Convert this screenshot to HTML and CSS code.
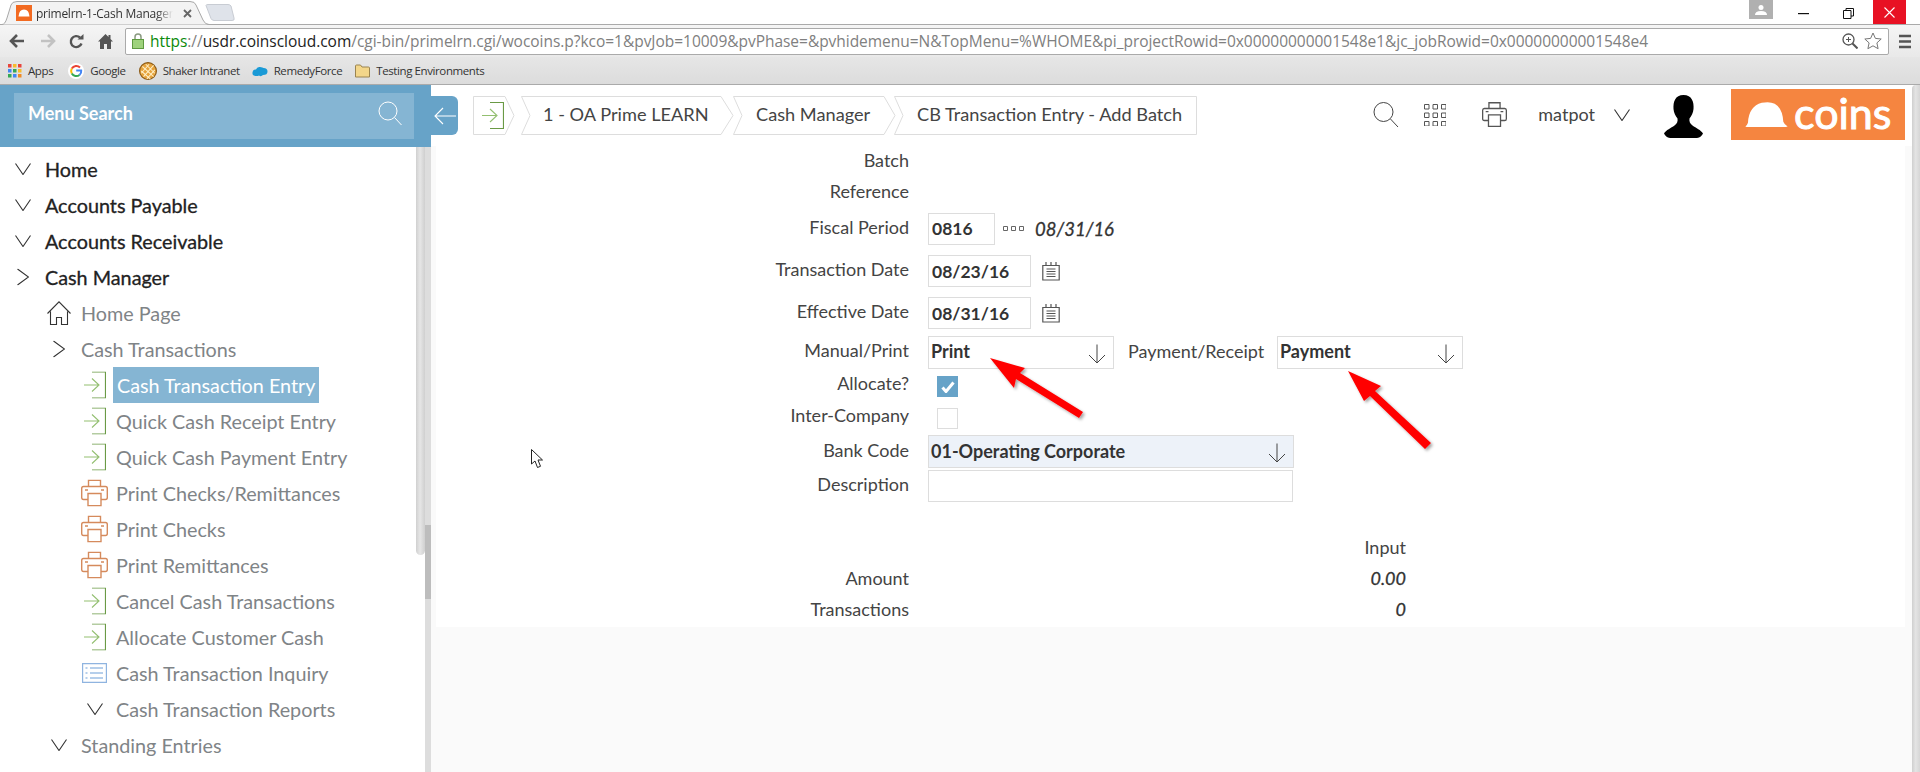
FILE: index.html
```html
<!DOCTYPE html>
<html lang="en">
<head>
    <meta charset="UTF-8">
    <title>primelrn-1-Cash Manager</title>
    <link rel="stylesheet" href="styles.css">
</head>
<body>
    <svg class="sprites" width="0" height="0">
        <symbol id="i-down" viewBox="0 0 16 12"><path d="M.5.5 8 11.5 15.5.5" fill="none" stroke="#333" stroke-width="1.1"/></symbol>
        <symbol id="i-right" viewBox="0 0 12 17"><path d="M.5.5 11.5 8.5.5 16.5" fill="none" stroke="#333" stroke-width="1.1"/></symbol>
        <symbol id="i-enter" viewBox="0 0 22 27">
            <path d="M8 .5h13.5v26H8" fill="none" stroke="#6a9a45" stroke-width="1.2"/>
            <path d="M0 13.5h14M8 7l7 6.500-7 6.500" fill="none" stroke="#93bf70" stroke-width="1.1"/>
        </symbol>
        <symbol id="i-print" viewBox="0 0 27 27">
            <path d="M7.500 7V.8h12V7M6.500 20H2.500Q.7 20 .7 18V9Q.7 7 2.500 7h22Q26.300 7 26.300 9v9Q26.300 20 24.500 20H20.500M7 14h13v12.300H7zM4 10.500h3M20 10.500h3" fill="none" stroke="currentColor" stroke-width="1.400"/>
        </symbol>
        <symbol id="i-list" viewBox="0 0 25 20">
            <path d="M.6.6h23.800v18.800H.6z" fill="none" stroke="#8fb4e0" stroke-width="1.200"/>
            <path d="M3.500 5h2M8 5h13M3.500 10h2M8 10h13M3.500 15h2M8 15h13" fill="none" stroke="#6f9fd8" stroke-width="1.100"/>
        </symbol>
        <symbol id="i-home" viewBox="0 0 24 24">
            <path d="M.5 12.500 12 .8l11.500 11.700M3.500 10.500v13h6v-7h5v7h6v-13" fill="none" stroke="#333" stroke-width="1.100"/>
        </symbol>
        <symbol id="i-select" viewBox="0 0 18 20"><path d="M9 .5v18.500M1 11l8 8 8-8" fill="none" stroke="#444" stroke-width="1"/></symbol>
        <symbol id="i-cal" viewBox="0 0 20 20">
            <path d="M1.800 4.500h16.400v14.500H1.800zM5 1v3.500M10 1v3.500M15 1v3.500" fill="none" stroke="#555" stroke-width="1.200"/>
            <path d="M5.500 8h9M5.500 10.500h9M5.500 13h9M5.500 15.500h9" fill="none" stroke="#555" stroke-width="1.100"/>
        </symbol>
    </svg>

    <div class="chrome">
        <div class="tabstrip">
            <svg class="tab-shape" width="240" height="25" viewBox="0 0 240 25">
                <path d="M0 24.500H2Q5 24.500 7 18L11 5Q12 1.500 17 1.500H190Q195 1.500 196 5L203 20Q205 24.500 209 24.500H240" fill="#f3f3f3" stroke="#a8a8a8"/>
                <path d="M206 5.500Q206 4.500 208 4.500H228Q230 4.500 231 6L234 18Q235 20.500 232 20.500H214Q212 20.500 211 18.500z" fill="#dfe3ea" stroke="#c8ccd3"/>
            </svg>
            <div class="tab">
                <svg class="favicon" width="16" height="16" viewBox="0 0 16 16"><rect width="16" height="16" fill="#f26a21"/><path d="M2.500 11.500Q3 4.500 8 4.500t5.500 7z" fill="#fff"/></svg>
                <span class="tab-title">primelrn-1-Cash Manager</span>
                <svg class="tab-close" width="9" height="9" viewBox="0 0 9 9"><path d="M1 1l7 7M8 1 1 8" stroke="#666" stroke-width="1.800"/></svg>
            </div>
            <div class="win-btns">
                <div class="win-user"><svg width="12" height="10" viewBox="0 0 12 10"><circle cx="6" cy="2.500" r="2.500" fill="#fff"/><path d="M0 10q0-4 6-4t6 4z" fill="#fff"/></svg></div>
                <svg class="win-min" width="11" height="2" viewBox="0 0 11 2"><rect width="11" height="1.200" fill="#111"/></svg>
                <svg class="win-max" width="11" height="11" viewBox="0 0 11 11"><path d="M.5 2.500h7.500v8H.5zM3 2.500V.5h7.500v7.500H8" fill="none" stroke="#111"/></svg>
                <div class="win-close"><svg width="11" height="11" viewBox="0 0 11 11"><path d="M.5.500l10 10M10.500.500l-10 10" stroke="#fff" stroke-width="1.100"/></svg></div>
            </div>
        </div>

        <div class="toolbar">
            <svg class="nav-btn" width="16" height="14" viewBox="0 0 16 14"><path d="M15 7H3M8 1 2 7l6 6" fill="none" stroke="#555" stroke-width="2.600"/></svg>
            <svg class="nav-btn nav-fwd" width="16" height="14" viewBox="0 0 16 14"><path d="M1 7h12M8 1l6 6-6 6" fill="none" stroke="#c2c2c2" stroke-width="2.600"/></svg>
            <svg class="nav-btn nav-reload" width="15" height="15" viewBox="0 0 15 15"><path d="M12.500 9.500A5.500 5.500 0 1 1 11 3.500" fill="none" stroke="#555" stroke-width="2.400"/><path d="M8.500 5.500H14.500V0z" fill="#555"/></svg>
            <svg class="nav-btn nav-home" width="15" height="15" viewBox="0 0 15 15"><path d="M7.500 0 0 7.500h2V15h4v-5h3v5h4V7.500h2l-2.500-2.500V1h-2v2z" fill="#555"/></svg>
            <div class="omnibox">
                <svg class="lock" width="12" height="16" viewBox="0 0 12 16"><path d="M3 7V4a3 3 0 0 1 6 0v3" fill="none" stroke="#8a9a80" stroke-width="1.500"/><rect x=".5" y="6.500" width="11" height="9" fill="#9ed27c" stroke="#5e9a40"/></svg>
                <div class="url"><span class="url-https">https</span><span class="url-rest">://</span><span class="url-host">usdr.coinscloud.com</span><span class="url-rest">/cgi-bin/primelrn.cgi/wocoins.p?kco=1&amp;pvJob=10009&amp;pvPhase=&amp;pvhidemenu=N&amp;TopMenu=%WHOME&amp;pi_projectRowid=0x00000000001548e1&amp;jc_jobRowid=0x00000000001548e4</span></div>
                <svg class="omni-zoom" width="16" height="16" viewBox="0 0 16 16"><circle cx="6.500" cy="6.500" r="5.500" fill="none" stroke="#555" stroke-width="1.300"/><path d="M10.500 10.500l5 5" stroke="#555" stroke-width="2"/><path d="M4 6.500h5M6.500 4v5" stroke="#555"/></svg>
                <svg class="omni-star" width="18" height="18" viewBox="0 0 18 18"><path d="M9 1l2.400 5.400 5.800.6-4.300 3.900 1.200 5.800L9 13.800l-5.100 2.900 1.200-5.800L.8 7l5.800-.6z" fill="none" stroke="#777"/></svg>
            </div>
            <svg class="hamburger" width="12" height="15" viewBox="0 0 12 15"><path d="M0 2h12M0 7.500h12M0 13h12" stroke="#555" stroke-width="2.500"/></svg>
        </div>

        <div class="bookmarks">
            <a class="bm bm-apps">
                <svg width="14" height="14" viewBox="0 0 14 14">
                    <rect width="3.500" height="3.500" fill="#e8453c"/><rect x="5" width="3.500" height="3.500" fill="#f9bb2d"/><rect x="10" width="3.500" height="3.500" fill="#e8453c"/>
                    <rect y="5" width="3.500" height="3.500" fill="#4285f4"/><rect x="5" y="5" width="3.500" height="3.500" fill="#34a853"/><rect x="10" y="5" width="3.500" height="3.500" fill="#f9bb2d"/>
                    <rect y="10" width="3.500" height="3.500" fill="#34a853"/><rect x="5" y="10" width="3.500" height="3.500" fill="#4285f4"/><rect x="10" y="10" width="3.500" height="3.500" fill="#f08a24"/>
                </svg>
                Apps
            </a>
            <a class="bm bm-google">
                <svg width="16" height="16" viewBox="0 0 16 16">
                    <circle cx="8" cy="8" r="8" fill="#fff"/>
                    <path d="M12 4.500A5.200 5.200 0 0 0 3.800 5.500" fill="none" stroke="#ea4335" stroke-width="2"/>
                    <path d="M3.800 5.500a5.200 5.200 0 0 0 0 5" fill="none" stroke="#fbbc05" stroke-width="2"/>
                    <path d="M3.800 10.500a5.200 5.200 0 0 0 7.700 1.500" fill="none" stroke="#34a853" stroke-width="2"/>
                    <path d="M11.500 12a5 5 0 0 0 1.700-4.500H8.200" fill="none" stroke="#4285f4" stroke-width="2"/>
                </svg>
                Google
            </a>
            <a class="bm bm-shaker">
                <svg width="18" height="18" viewBox="0 0 16 16"><circle cx="8" cy="8" r="7.500" fill="#e6a33c" stroke="#8a5a18"/><path d="M3 4l10 9M2 8l8 7M6 2l8 8M13 3 4 13M9 2 2 10M14 7l-7 8" stroke="#fff0c8" stroke-width=".9"/></svg>
                Shaker Intranet
            </a>
            <a class="bm bm-remedy">
                <svg width="16" height="12" viewBox="0 0 16 12"><path d="M4 11Q0 11 .5 7.500T4 4.500Q5 1.500 8 2t3.500 1Q15.500 3 15.500 6.500T11 10q-2 2-4 .5-1.500.8-3 .5z" fill="#1a9ad6"/></svg>
                RemedyForce
            </a>
            <a class="bm bm-folder">
                <svg width="15" height="14" viewBox="0 0 15 14"><path d="M.5 13V2q0-1 1-1h4l1.500 2h6.500q1 0 1 1v9z" fill="#f3d68a" stroke="#9a8450"/></svg>
                Testing Environments
            </a>
        </div>
    </div>

    <div class="main">
        <aside class="sidebar">
            <div class="search-band">
                <div class="search-box">
                    <span>Menu Search</span>
                    <svg width="24" height="25" viewBox="0 0 24 25"><circle cx="10" cy="10" r="9" fill="none" stroke="#fff"/><path d="M16.500 16.500 23.500 24" stroke="#fff"/></svg>
                </div>
            </div>
            <ul class="menu">
                <li class="lvl0"><svg class="chev"><use href="#i-down"/></svg>Home</li>
                <li class="lvl0"><svg class="chev"><use href="#i-down"/></svg>Accounts Payable</li>
                <li class="lvl0"><svg class="chev"><use href="#i-down"/></svg>Accounts Receivable</li>
                <li class="lvl0"><svg class="chev-r"><use href="#i-right"/></svg>Cash Manager</li>
                <li class="lvl1"><svg class="ico-home"><use href="#i-home"/></svg>Home Page</li>
                <li class="lvl1"><svg class="chev-r"><use href="#i-right"/></svg>Cash Transactions</li>
                <li class="lvl2"><svg class="ico-enter"><use href="#i-enter"/></svg><span class="selected">Cash Transaction Entry</span></li>
                <li class="lvl2"><svg class="ico-enter"><use href="#i-enter"/></svg>Quick Cash Receipt Entry</li>
                <li class="lvl2"><svg class="ico-enter"><use href="#i-enter"/></svg>Quick Cash Payment Entry</li>
                <li class="lvl2"><svg class="ico-print"><use href="#i-print"/></svg>Print Checks/Remittances</li>
                <li class="lvl2"><svg class="ico-print"><use href="#i-print"/></svg>Print Checks</li>
                <li class="lvl2"><svg class="ico-print"><use href="#i-print"/></svg>Print Remittances</li>
                <li class="lvl2"><svg class="ico-enter"><use href="#i-enter"/></svg>Cancel Cash Transactions</li>
                <li class="lvl2"><svg class="ico-enter"><use href="#i-enter"/></svg>Allocate Customer Cash</li>
                <li class="lvl2"><svg class="ico-list"><use href="#i-list"/></svg>Cash Transaction Inquiry</li>
                <li class="lvl2"><svg class="chev"><use href="#i-down"/></svg>Cash Transaction Reports</li>
                <li class="lvl1"><svg class="chev"><use href="#i-down"/></svg>Standing Entries</li>
            </ul>
            <div class="side-track"><div class="side-track-thumb"></div></div>
            <div class="side-thumb"></div>
        </aside>

        <div class="content">
            <header class="topbar">
                <button class="collapse"><svg width="22" height="18" viewBox="0 0 22 18"><path d="M22 9H1M9 1 1 9l8 8" fill="none" stroke="#fff" stroke-width="1.100"/></svg></button>
                <nav class="crumbs">
                    <div class="crumb crumb-start">
                        <svg class="crumb-shape" viewBox="0 0 42 39"><path d="M.5.5H32L41 19.500 32 38.500H.5z" fill="#fff" stroke="#ddd"/></svg>
                        <svg class="ico-enter"><use href="#i-enter"/></svg>
                    </div>
                    <div class="crumb crumb-oa">
                        <svg class="crumb-shape" viewBox="0 0 213 39"><path d="M.5.5H200L212 19.500 200 38.500H.5L9 19.500z" fill="#fff" stroke="#ddd"/></svg>
                        <span>1 - OA Prime LEARN</span>
                    </div>
                    <div class="crumb crumb-cash">
                        <svg class="crumb-shape" viewBox="0 0 163 39"><path d="M.5.5H151L162 19.500 151 38.500H.5L9 19.500z" fill="#fff" stroke="#ddd"/></svg>
                        <span>Cash Manager</span>
                    </div>
                    <div class="crumb crumb-entry">
                        <svg class="crumb-shape" viewBox="0 0 303 39"><path d="M.5.5H302.500V38.500H.5L9 19.500z" fill="#fff" stroke="#ddd"/></svg>
                        <span>CB Transaction Entry - Add Batch</span>
                    </div>
                </nav>
                <div class="tools">
                    <svg class="tool-search" width="26" height="25" viewBox="0 0 26 25"><circle cx="10.500" cy="10" r="9.500" fill="none" stroke="#444"/><path d="M17.500 17 25 25" stroke="#444"/></svg>
                    <svg class="tool-grid" width="22" height="22" viewBox="0 0 22 22">
                        <path d="M.5.500h4.500v4.500H.5zM9 .5h4.500v4.500H9zM17.500.5H22v4.500h-4.500zM.5 9h4.500v4.500H.5zM9 9h4.500v4.500H9zM17.500 9H22v4.500h-4.500zM.5 17.500h4.500V22H.5zM9 17.500h4.500V22H9zM17.500 17.500H22V22h-4.500z" fill="none" stroke="#555"/>
                    </svg>
                    <svg class="tool-print"><use href="#i-print"/></svg>
                    <span class="username">matpot</span>
                    <svg class="chev tool-chev"><use href="#i-down"/></svg>
                    <svg class="avatar" width="39" height="43" viewBox="0 0 39 43"><path d="M19.500 0C11 0 9 7 9.500 14c.3 4 2 7 4 9.500.5 3-.5 5-3 7C7 33 2 35 0 38.500c1 2 3 4.500 6 4.500h27c3 0 5-2.500 6-4.500-2-3.500-7-5.500-10.500-8-2.500-2-3.500-4-3-7 2-2.500 3.700-5.500 4-9.500C30 7 28 0 19.500 0z"/></svg>
                    <div class="logo">
                        <svg width="43" height="25" viewBox="0 0 49 29"><path d="M0 28.500Q2 27 3 24 4 5 19 1q9-2 15 1 9 5 10 21 1 3 5 5.500-3 1-9 .5H5q-3 .5-5-.5z" fill="#fff"/></svg>
                        <span>coins</span>
                    </div>
                </div>
            </header>

            <div class="pane">
                <form class="entry-form">
                    <label>Batch</label>
                    <label>Reference</label>

                    <label>Fiscal Period</label>
                    <div class="field">
                        <input class="inp inp-period" type="text" value="0816">
                        <svg class="dots" width="21" height="5" viewBox="0 0 21 5"><path d="M.5.500h4v4h-4zM8.500.5h4v4h-4zM16.500.5h4v4h-4z" fill="none" stroke="#666"/></svg>
                        <em class="period-end">08/31/16</em>
                    </div>

                    <label>Transaction Date</label>
                    <div class="field">
                        <input class="inp inp-date" type="text" value="08/23/16">
                        <svg class="cal"><use href="#i-cal"/></svg>
                    </div>

                    <label>Effective Date</label>
                    <div class="field">
                        <input class="inp inp-date" type="text" value="08/31/16">
                        <svg class="cal"><use href="#i-cal"/></svg>
                    </div>

                    <label>Manual/Print</label>
                    <div class="field">
                        <div class="select">Print<svg class="sel-arrow"><use href="#i-select"/></svg></div>
                        <label class="inline-label">Payment/Receipt</label>
                        <div class="select">Payment<svg class="sel-arrow"><use href="#i-select"/></svg></div>
                    </div>

                    <label class="lbl-check">Allocate?</label>
                    <div class="field">
                        <span class="check check-on"><svg width="14" height="12" viewBox="0 0 14 12"><path d="M1.500 6.500 5 10.500 12.500 1.500" fill="none" stroke="#fff" stroke-width="3"/></svg></span>
                    </div>

                    <label class="lbl-check">Inter-Company</label>
                    <div class="field"><span class="check"></span></div>

                    <label>Bank Code</label>
                    <div class="field">
                        <div class="select select-bank">01-Operating Corporate<svg class="sel-arrow"><use href="#i-select"/></svg></div>
                    </div>

                    <label>Description</label>
                    <div class="field"><input class="inp inp-desc" type="text"></div>

                    <div class="spacer"></div>

                    <div class="total-val total-head">Input</div>
                    <label>Amount</label>
                    <div class="total-val"><em>0.00</em></div>
                    <label>Transactions</label>
                    <div class="total-val"><em>0</em></div>
                </form>
            </div>
        </div>

        <div class="page-scroll"></div>
    </div>

    <!-- annotation arrows and the mouse pointer on top of the screenshot -->
    <svg class="overlay" viewBox="0 0 1920 772">
        <defs>
            <filter id="arrow-shadow" x="-20%" y="-20%" width="150%" height="150%">
                <feDropShadow dx="2" dy="2" stdDeviation="1.500" flood-color="#000" flood-opacity=".35"/>
            </filter>
        </defs>
        <polygon points="990,358 1025,368 1020,373 1083,412 1079,418 1016,379 1014,388" fill="#f00" filter="url(#arrow-shadow)"/>
        <polygon points="1348,371 1381,386 1375,391 1431,443 1425,449 1370,396 1364,401" fill="#f00" filter="url(#arrow-shadow)"/>
        <path d="M531.500 449.500v14.500l3.500-3 2.500 6.500 3-1.200-2.500-6.300h4.500z" fill="#fff" stroke="#222"/>
    </svg>
</body>
</html>
```

FILE: styles.css
```css
* {
    margin: 0;
    padding: 0;
    box-sizing: border-box;
}

html, body {
    height: 772px;
    overflow: hidden;
}

body {
    display: flex;
    flex-direction: column;
    background: #fff;
    color: #333;
    font-family: "Lato", "Liberation Sans", sans-serif;
    position: relative;
}

.sprites {
    position: absolute;
}

/* browser window */
.chrome {
    height: 85px;
    flex: none;
    font-family: "Open Sans", "Noto Sans", sans-serif;
    border-bottom: 1px solid #aaa;
}

.tabstrip {
    height: 24px;
    display: flex;
    align-items: flex-start;
    position: relative;
}

.tab-shape {
    position: absolute;
    left: 0;
    top: 0;
}

.tab {
    position: relative;
    display: flex;
    align-items: center;
    margin: 5px 0 0 16px;
    height: 16px;
}

.tab-title {
    width: 137px;
    margin-left: 4px;
    white-space: nowrap;
    font-size: 12px;
    letter-spacing: -0.25px;
    color: #333;
    -webkit-mask-image: linear-gradient(90deg, #000 88%, transparent);
    mask-image: linear-gradient(90deg, #000 88%, transparent);
}

.tab-close {
    margin-left: 10px;
}

.win-btns {
    margin-left: auto;
    margin-right: 14px;
    display: flex;
    align-items: flex-start;
}

.win-user {
    width: 24px;
    height: 19px;
    background: #b0b0b0;
    display: flex;
    align-items: center;
    justify-content: center;
}

.win-min {
    margin: 13px 0 0 25px;
}

.win-max {
    margin: 8px 0 0 34px;
}

.win-close {
    width: 33px;
    height: 24px;
    margin-left: 19px;
    background: #e81123;
    display: flex;
    align-items: center;
    justify-content: center;
}

.toolbar {
    height: 33px;
    display: flex;
    align-items: center;
    background: linear-gradient(#f5f5f5, #e9e9e9);
    border-top: 1px solid #aaa;
}

.nav-btn {
    margin-left: 9px;
}

.nav-fwd {
    margin-left: 15px;
}

.nav-reload {
    margin-left: 13px;
}

.nav-home {
    margin-left: 14px;
}

.omnibox {
    width: 1764px;
    height: 27px;
    margin-left: 12px;
    display: flex;
    align-items: center;
    background: #fff;
    border: 1px solid #aaa;
    border-radius: 2px;
    padding: 0 6px 0 6px;
}

.url {
    margin-left: 6px;
    font-size: 15.500px;
    white-space: nowrap;
    letter-spacing: -0.03px;
}

.url-https {
    color: #0a8a0a;
}

.url-host {
    color: #222;
}

.url-rest {
    color: #808080;
}

.omni-zoom {
    margin-left: auto;
}

.omni-star {
    margin-left: 6px;
}

.hamburger {
    margin-left: 10px;
}

.bookmarks {
    height: 27px;
    display: flex;
    align-items: center;
    background: linear-gradient(#e6e6e6, #dcdcdc);
    font-size: 11.500px;
    letter-spacing: -0.4px;
    color: #333;
}

.bm {
    display: flex;
    align-items: center;
    gap: 6px;
}

.bm-apps {
    margin-left: 8px;
}

.bm-google {
    margin-left: 15px;
}

.bm-shaker {
    margin-left: 13px;
}

.bm-remedy {
    margin-left: 12px;
}

.bm-folder {
    margin-left: 13px;
}

/* app */
.main {
    flex: 1;
    min-height: 0;
    display: flex;
}

.sidebar {
    width: 431px;
    flex: none;
    position: relative;
    overflow: hidden;
}

.search-band {
    height: 62px;
    background: #67a3c8;
    padding: 8px 17px 0 14px;
}

.search-box {
    height: 46px;
    background: #85b5d3;
    color: #fff;
    font-size: 18px;
    font-weight: 700;
    display: flex;
    align-items: center;
    justify-content: space-between;
    padding: 0 12px 6px 14px;
}

.menu {
    list-style: none;
    padding-top: 4px;
    font-size: 19.800px;
    color: #7f8487;
}

.menu li {
    height: 36px;
    display: flex;
    align-items: center;
    white-space: nowrap;
    position: relative;
}

.lvl0 {
    padding-left: 45px;
    color: #222;
    -webkit-text-stroke: 0.3px #222;
}

.lvl1 {
    padding-left: 81px;
}

.lvl2 {
    padding-left: 116px;
}

/* the tree icons hang in the indent to the left of each label */
.menu li svg {
    position: absolute;
    top: 50%;
    transform: translateY(-50%);
}

.chev {
    width: 16px;
    height: 12px;
}

.chev-r {
    width: 12px;
    height: 17px;
}

.lvl0 .chev {
    left: 15px;
}

.lvl0 .chev-r {
    left: 17px;
}

.lvl1 .chev {
    left: 51px;
}

.lvl1 .chev-r {
    left: 53px;
}

.lvl2 .chev {
    left: 87px;
}

.ico-home {
    width: 24px;
    height: 24px;
    left: 47px;
}

.ico-enter {
    width: 22px;
    height: 27px;
}

.lvl2 .ico-enter {
    left: 84px;
}

.ico-print {
    width: 27px;
    height: 27px;
    left: 81px;
    color: #d58a5c;
}

.ico-list {
    width: 25px;
    height: 20px;
    left: 82px;
}

.selected {
    background: #85b5d3;
    color: #fff;
    height: 36px;
    line-height: 36px;
    padding: 0 4px 0 4px;
    margin-left: -3px;
}

.side-track {
    position: absolute;
    left: 425px;
    top: 62px;
    bottom: 0;
    width: 6px;
    background: #ddd;
}

.side-track-thumb {
    position: absolute;
    top: 378px;
    height: 74px;
    width: 6px;
    background: #bdbdbd;
}

.side-thumb {
    position: absolute;
    left: 416px;
    top: 62px;
    width: 9px;
    height: 408px;
    border-radius: 0 0 5px 5px;
    background: linear-gradient(90deg, #d0d0d0, #e6e6e6 45%, #cfcfcf);
}

.content {
    flex: 1;
    min-width: 0;
    display: flex;
    flex-direction: column;
}

.topbar {
    height: 61px;
    flex: none;
    display: flex;
    align-items: flex-start;
}

.collapse {
    width: 27px;
    height: 39px;
    margin-top: 11px;
    border: 0;
    border-radius: 0 6px 6px 0;
    background: #67a3c8;
    display: flex;
    align-items: center;
    justify-content: center;
}

.crumbs {
    display: flex;
    margin: 11px 0 0 15px;
    font-size: 18.200px;
    color: #444;
}

.crumb {
    height: 39px;
    position: relative;
    display: flex;
    align-items: center;
    white-space: nowrap;
}

.crumb span {
    position: relative;
    margin-top: -4px;
}

.crumb-shape {
    position: absolute;
    left: 0;
    top: 0;
    width: 100%;
    height: 100%;
}

.crumb-start {
    width: 42px;
}

.crumb-start .ico-enter {
    position: relative;
    margin-left: 9px;
}

.crumb-oa {
    width: 213px;
    margin-left: 6px;
    padding-left: 22px;
}

.crumb-cash {
    width: 163px;
    margin-left: -1px;
    padding-left: 23px;
}

.crumb-entry {
    width: 303px;
    margin-left: -2px;
    padding-left: 23px;
}

.tools {
    margin-left: auto;
    display: flex;
    align-items: center;
    height: 61px;
    margin-top: -1px;
    padding-right: 7px;
}

.tool-grid {
    margin-left: 25px;
}

.tool-print {
    width: 25px;
    height: 25px;
    margin-left: 36px;
    color: #555;
}

.username {
    margin-left: 31px;
    font-size: 18px;
    color: #444;
    padding-bottom: 1px;
}

.tool-chev {
    margin-left: 19px;
}

.avatar {
    margin-left: 34px;
    margin-top: 3px;
}

.logo {
    width: 174px;
    height: 51px;
    margin-left: 28px;
    background: #f58540;
    color: #fff;
    display: flex;
    align-items: center;
    padding-left: 14px;
    font-size: 43px;
    font-weight: 400;
    -webkit-text-stroke: 1px #fff;
}

.logo span {
    margin: -4px 0 0 6px;
    line-height: 1;
}

.pane {
    flex: 1;
    background: #fafafa;
    padding: 0 7px 0 5px;
}

/* label column runs up to 909px, fields start at 928px */
.entry-form {
    display: grid;
    grid-template-columns: 473px 1fr;
    grid-template-rows: 31px 31px 41px 44px 40px 38px 31px 33px 33px 36px 28px 32px 31px 32px;
    column-gap: 19px;
    background: #fff;
    font-size: 18px;
    color: #444;
}

.entry-form > label {
    grid-column: 1;
    text-align: right;
    align-self: center;
    padding-bottom: 4px;
}

.entry-form > .lbl-check {
    padding-bottom: 8px;
}

.field {
    grid-column: 2;
    display: flex;
    align-items: center;
}

.spacer {
    grid-column: 1 / -1;
}

.inp {
    height: 32px;
    border: 1px solid #ddd;
    background: #fff;
    font: 700 17.500px "Lato", "Liberation Sans", sans-serif;
    color: #333;
    padding: 0 3px;
    outline: none;
}

.inp-period {
    width: 67px;
}

.inp-date {
    width: 103px;
}

.inp-desc {
    width: 365px;
}

.dots {
    margin-left: 8px;
}

.period-end {
    margin-left: 11px;
    font-size: 18.500px;
    color: #333;
    -webkit-text-stroke: 0.3px #333;
}

.cal {
    width: 20px;
    height: 20px;
    margin-left: 10px;
}

.select {
    position: relative;
    width: 186px;
    height: 33px;
    display: flex;
    align-items: center;
    border: 1px solid #ddd;
    background: #fff;
    padding: 0 0 2px 2px;
    font-weight: 700;
    color: #333;
}

.select-bank {
    width: 366px;
    background: #edf2f9;
}

.sel-arrow {
    position: absolute;
    right: 7px;
    top: 7px;
    width: 18px;
    height: 20px;
}

.inline-label {
    width: 163px;
    padding-left: 14px;
    padding-bottom: 2px;
}

.check {
    display: block;
    width: 21px;
    height: 21px;
    margin-left: 9px;
    border: 1px solid #ddd;
}

.check-on {
    background: #67a3c8;
    border-color: #67a3c8;
    display: flex;
    align-items: center;
    justify-content: center;
}

.total-val {
    grid-column: 2;
    width: 478px;
    text-align: right;
    align-self: center;
    padding-bottom: 4px;
    color: #333;
    -webkit-text-stroke: 0.3px #333;
}

.total-head {
    color: #444;
    padding-bottom: 2px;
    -webkit-text-stroke: 0;
}

.page-scroll {
    width: 8px;
    flex: none;
    border-radius: 4px 0 0 0;
    background: linear-gradient(90deg, #cfcfcf, #e4e4e4 45%, #d6d6d6);
}

.overlay {
    position: absolute;
    left: 0;
    top: 0;
    width: 1920px;
    height: 772px;
    pointer-events: none;
}
```
